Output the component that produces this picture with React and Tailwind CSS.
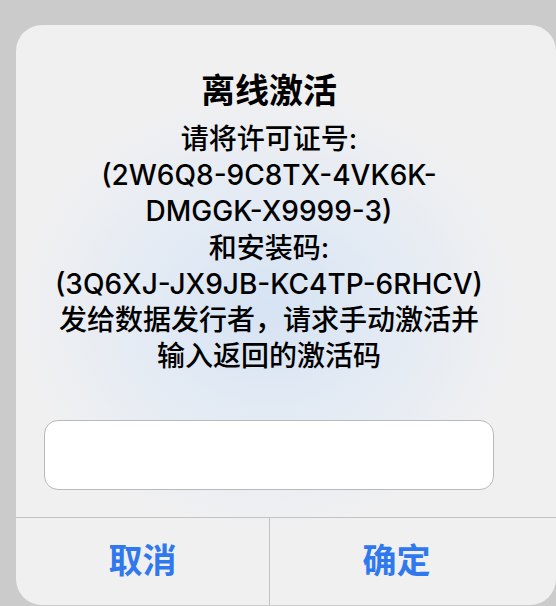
export default function App() {
  return (
    <div
      className="min-h-[606px] w-[556px] overflow-hidden bg-[#cbcbcb] pl-[16px] pt-[25px]"
      style={{ fontFamily: 'Inter, "Noto Sans CJK SC", sans-serif' }}
    >
      <div className="flex h-[580px] w-[540px] flex-col overflow-hidden rounded-[26px] bg-[#f0f0f1] bg-[radial-gradient(ellipse_250px_220px_at_254px_285px,#d6e3f3_0%,#e2eaf4_45%,#f0f0f1_100%)]">
        <div className="flex flex-1 flex-col items-center pr-[34px] pt-[46px]">
          <h1 className="text-[34px] font-bold leading-[40px] text-black">离线激活</h1>
          <div className="mt-[10px] text-center text-[28px] font-medium leading-[36.2px] text-black">
            <p>请将许可证号:</p>
            <p>(2W6Q8-9C8TX-4VK6K-</p>
            <p>DMGGK-X9999-3)</p>
            <p>和安装码:</p>
            <p>(3Q6XJ-JX9JB-KC4TP-6RHCV)</p>
            <p>发给数据发行者，请求手动激活并</p>
            <p>输入返回的激活码</p>
          </div>
          <input
            type="text"
            className="mt-[46px] h-[70px] w-[450px] rounded-[14px] border border-[#b9b9bd] bg-white px-3 outline-none"
          />
        </div>
        <div className="flex h-[88px] border-t border-[#c3c3c6]">
          <button className="flex w-[253px] items-center justify-center pb-[2px] text-[34px] font-semibold text-[#2f78ee]">
            取消
          </button>
          <div className="w-px bg-[#c3c3c6]" />
          <button className="flex w-[253px] items-center justify-center pb-[2px] text-[34px] font-semibold text-[#2f78ee]">
            确定
          </button>
        </div>
      </div>
    </div>
  )
}
